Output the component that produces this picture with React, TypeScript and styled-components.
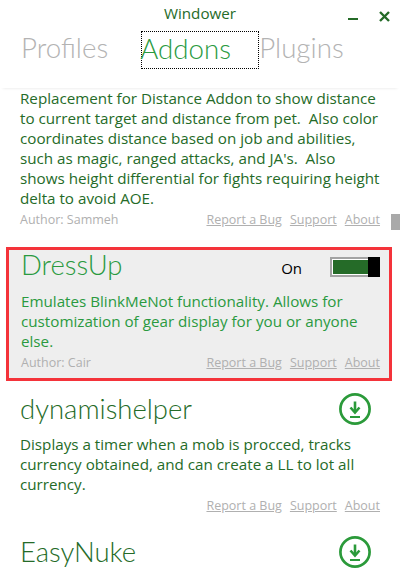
import React from "react";
import styled, { createGlobalStyle } from "styled-components";

type Addon = {
  name: string;
  description: string;
};

const GlobalStyle = createGlobalStyle`
  html, body {
    margin: 0;
    padding: 0;
    background: #fff;
  }
`;

const addons: Addon[] = [
  {
    name: "dynamishelper",
    description:
      "Displays a timer when a mob is procced, tracks currency obtained, and can create a LL to lot all currency.",
  },
];

const DownloadIcon = () => (
  <IconSlot>
    <svg width="32" height="32" viewBox="0 0 32 32" fill="none" stroke="#2b9a3a">
      <circle cx="16" cy="16" r="14.6" strokeWidth="2.7" />
      <path d="M16 8.5v10" strokeWidth="2.6" />
      <path d="M11.5 14.5l4.5 5 4.5-5" strokeWidth="2.6" />
      <path d="M11 24h10" strokeWidth="2" />
    </svg>
  </IconSlot>
);

const Links = () => (
  <FooterLinks>
    <FooterLink>Report a Bug</FooterLink>
    <FooterLink>Support</FooterLink>
    <FooterLink>About</FooterLink>
  </FooterLinks>
);

const App: React.FC = () => {
  return (
    <Window>
      <GlobalStyle />
      <TitleBar>
        <Title>Windower</Title>
        <Controls>
          <Minimize />
          <Close>
            <svg width="11" height="11" viewBox="0 0 11 11" stroke="#256b28" strokeWidth="2.4">
              <path d="M1 1l9 9M10 1l-9 9" />
            </svg>
          </Close>
        </Controls>
      </TitleBar>
      <Tabs>
        <Tab>Profiles</Tab>
        <Tab $active>Addons</Tab>
        <Tab>Plugins</Tab>
      </Tabs>
      <List>
        <FirstItem>
          <Description $gap={0}>
            Replacement for Distance Addon to show distance to current target and distance from pet.&nbsp; Also color
            coordinates distance based on job and abilities, such as magic, ranged attacks, and JA's.&nbsp; Also shows
            height differential for fights requiring height delta to avoid AOE.
          </Description>
          <Footer>
            <Author>Author: Sammeh</Author>
            <Links />
          </Footer>
        </FirstItem>
        <SelectedItem>
          <SelectedHeader>
            <ItemName $selected>DressUp</ItemName>
            <ToggleWrap>
              <ToggleLabel>On</ToggleLabel>
              <Toggle>
                <ToggleFill />
                <ToggleKnob />
              </Toggle>
            </ToggleWrap>
          </SelectedHeader>
          <Description $selected $gap={11}>
            Emulates BlinkMeNot functionality. Allows for customization of gear display for you or anyone else.
          </Description>
          <Footer>
            <Author>Author: Cair</Author>
            <Links />
          </Footer>
        </SelectedItem>
        {addons.map((addon) => (
          <Item key={addon.name}>
            <ItemHeader>
              <ItemName>{addon.name}</ItemName>
              <DownloadIcon />
            </ItemHeader>
            <Description>{addon.description}</Description>
            <Footer>
              <Author />
              <Links />
            </Footer>
          </Item>
        ))}
        <LastItem>
          <ItemHeader>
            <ItemName>EasyNuke</ItemName>
            <DownloadIcon />
          </ItemHeader>
        </LastItem>
      </List>
      <ScrollThumb />
    </Window>
  );
};

const Window = styled.div`
  position: relative;
  width: 400px;
  height: 570px;
  overflow: hidden;
  background: #fff;
  font-family: "Open Sans", "Noto Sans", sans-serif;
`;

const TitleBar = styled.div`
  position: relative;
  height: 28px;
  display: flex;
  justify-content: center;
  padding-top: 4px;
  box-sizing: border-box;
`;

const Title = styled.div`
  font-size: 15.2px;
  line-height: 18px;
  color: #256b28;
`;

const Controls = styled.div`
  position: absolute;
  top: 11px;
  right: 10px;
  display: flex;
  align-items: flex-end;
  gap: 21px;
`;

const Minimize = styled.div`
  width: 10px;
  height: 2px;
  margin-bottom: 2px;
  background: #256b28;
`;

const Close = styled.div`
  display: flex;
  width: 11px;
  height: 11px;
`;

const Tabs = styled.div`
  height: 60px;
  box-sizing: border-box;
  padding: 3px 0 0 21px;
  display: flex;
  align-items: flex-start;
  box-shadow: 0 3px 3px -3px rgba(0, 0, 0, 0.12);
`;

const Tab = styled.div<{ $active?: boolean }>`
  box-sizing: border-box;
  height: 38px;
  font-family: "Lato", "Open Sans", sans-serif;
  font-weight: 300;
  font-size: 27.7px;
  line-height: 34px;
  color: ${({ $active }) => ($active ? "#2a9a3f" : "#b3b3b3")};
  ${({ $active }) =>
    $active
      ? `
    width: 118px;
    margin-left: 33px;
    border: 1px dotted #000;
    text-indent: -2px;
  `
      : ""}
`;

const List = styled.div`
  display: flex;
  flex-direction: column;
`;

const FirstItem = styled.div`
  padding: 0 20px;
  margin-bottom: 18px;
`;

const Item = styled.div`
  padding: 0 20px;
  margin-top: 11px;
`;

const LastItem = styled(Item)`
  margin-top: 20px;
`;

const SelectedItem = styled.div`
  margin: 0 8px 0 6px;
  padding: 0 9px 0 12px;
  height: 134px;
  box-sizing: border-box;
  border: 3px solid #f4333a;
  background: #eeeeee;
`;

const ItemHeader = styled.div`
  display: flex;
  justify-content: space-between;
  align-items: center;
  height: 34px;
`;

const SelectedHeader = styled(ItemHeader)`
  height: 30px;
`;

const ItemName = styled.div<{ $selected?: boolean }>`
  font-family: "Lato", "Open Sans", sans-serif;
  font-weight: 300;
  font-size: 27.5px;
  line-height: 34px;
  color: ${({ $selected }) => ($selected ? "#2a9a3f" : "#256b28")};
`;

const IconSlot = styled.div`
  display: flex;
  margin-right: 9px;
`;

const ToggleWrap = styled.div`
  display: flex;
  align-items: center;
  gap: 28px;
  padding-top: 4px;
`;

const ToggleLabel = styled.span`
  font-size: 15px;
  margin-top: 2px;
  color: #000;
`;

const Toggle = styled.div`
  position: relative;
  width: 50px;
  height: 20px;
  box-sizing: border-box;
  border: 2px solid #a3a3a3;
  padding: 1px;
  background: #fff;
`;

const ToggleFill = styled.div`
  height: 100%;
  background: #256b28;
`;

const ToggleKnob = styled.div`
  position: absolute;
  top: -2px;
  right: -2px;
  width: 12px;
  height: 20px;
  background: #000;
`;

const Description = styled.p<{ $selected?: boolean; $gap?: number }>`
  margin: ${({ $gap }) => $gap ?? 8}px 0 0;
  font-size: 15.2px;
  line-height: 20px;
  color: ${({ $selected }) => ($selected ? "#2a9a3f" : "#256b28")};
`;

const Footer = styled.div`
  display: flex;
  justify-content: space-between;
  align-items: center;
  height: 20px;
  margin-top: 1px;
  font-size: 12.5px;
  color: #b0b0b0;
`;

const Author = styled.span``;

const FooterLinks = styled.div`
  display: flex;
  gap: 8px;
`;

const FooterLink = styled.span`
  text-decoration: underline;
`;

const ScrollThumb = styled.div`
  position: absolute;
  top: 214px;
  right: 0;
  width: 9px;
  height: 16px;
  background: #a9a9a9;
`;

export default App;
